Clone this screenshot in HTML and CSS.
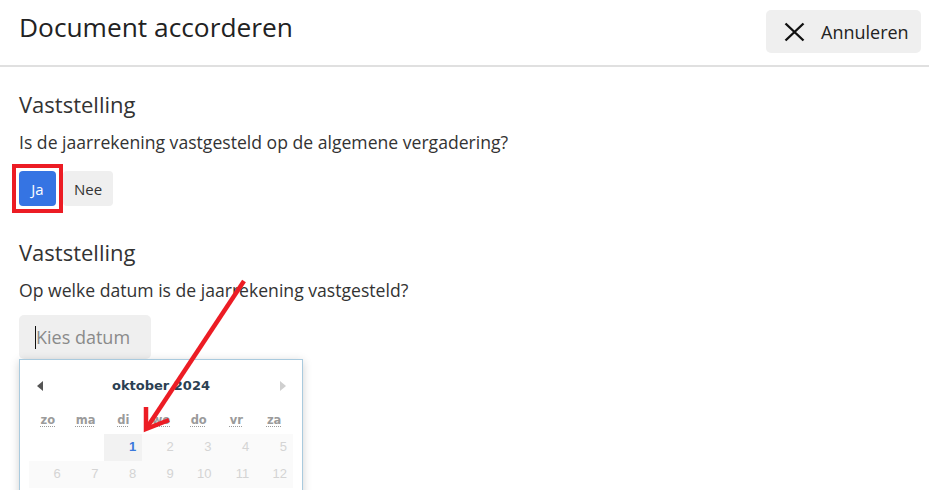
FILE: index.html
```html
<!DOCTYPE html>
<html lang="nl">
<head>
<meta charset="utf-8">
<title>Document accorderen</title>
<link rel="stylesheet" href="styles.css">
</head>
<body>
<header class="topbar">
  <h1 class="title">Document accorderen</h1>
  <button class="cancel" type="button">
    <svg class="cancel-icon" width="21" height="20" viewBox="0 0 21 20" aria-hidden="true">
      <path d="M1.5 1.5 L19.5 18.5 M19.5 1.5 L1.5 18.5" stroke="#111" stroke-width="2.4" fill="none"/>
    </svg>
    <span>Annuleren</span>
  </button>
</header>

<main class="content">
  <section class="field">
    <h2 class="field-title">Vaststelling</h2>
    <p class="field-question">Is de jaarrekening vastgesteld op de algemene vergadering?</p>
    <div class="toggle">
      <button class="opt opt-active" type="button">Ja</button>
      <button class="opt" type="button">Nee</button>
    </div>
  </section>

  <section class="field field-date">
    <h2 class="field-title">Vaststelling</h2>
    <p class="field-question">Op welke datum is de jaarrekening vastgesteld?</p>
    <div class="date-wrap">
      <input class="date-input" type="text" placeholder="Kies datum">
      <span class="date-caret"></span>
      <div class="datepicker">
        <div class="dp-header">
          <span class="dp-prev"></span>
          <span class="dp-month">oktober 2024</span>
          <span class="dp-next"></span>
        </div>
        <div class="dp-grid">
          <div class="dp-wd"><abbr title="zondag">zo</abbr></div>
          <div class="dp-wd"><abbr title="maandag">ma</abbr></div>
          <div class="dp-wd"><abbr title="dinsdag">di</abbr></div>
          <div class="dp-wd"><abbr title="woensdag">wo</abbr></div>
          <div class="dp-wd"><abbr title="donderdag">do</abbr></div>
          <div class="dp-wd"><abbr title="vrijdag">vr</abbr></div>
          <div class="dp-wd"><abbr title="zaterdag">za</abbr></div>

          <div class="dp-empty"></div>
          <div class="dp-empty"></div>
          <div class="dp-day dp-day-active">1</div>
          <div class="dp-day">2</div>
          <div class="dp-day">3</div>
          <div class="dp-day">4</div>
          <div class="dp-day">5</div>

          <div class="dp-day">6</div>
          <div class="dp-day">7</div>
          <div class="dp-day">8</div>
          <div class="dp-day">9</div>
          <div class="dp-day">10</div>
          <div class="dp-day">11</div>
          <div class="dp-day">12</div>
        </div>
      </div>
    </div>
  </section>
</main>

<svg class="annot-arrow" width="929" height="490" viewBox="0 0 929 490" aria-hidden="true">
  <line x1="244" y1="281" x2="148" y2="426" stroke="#ec1c24" stroke-width="4.5"/>
  <polyline points="146,407 146,429 169,420" stroke="#ec1c24" stroke-width="4.5" fill="none" stroke-linejoin="miter"/>
</svg>
</body>
</html>
```

FILE: styles.css
```css
html, body {
  margin: 0;
  padding: 0;
  overflow: hidden;
  background: #fff;
}

body {
  font-family: "Open Sans", "Noto Sans", sans-serif;
  color: #333;
  width: 929px;
  height: 490px;
  position: relative;
}

/* ---------- top bar ---------- */
.topbar {
  height: 65px;
  border-bottom: 2px solid #e0e0e0;
  display: flex;
  justify-content: space-between;
  align-items: flex-start;
  padding: 0 8px 0 19px;
}

.title {
  margin: 9px 0 0;
  font-size: 26.3px;
  line-height: 36px;
  font-weight: 400;
  color: #222;
}

.cancel {
  margin-top: 10px;
  width: 155px;
  height: 43px;
  box-sizing: border-box;
  padding: 0 12px 0 18px;
  display: flex;
  align-items: center;
  gap: 16px;
  border: none;
  border-radius: 5px;
  background: #efefef;
  font-family: "Open Sans", sans-serif;
  font-size: 18px;
  color: #222;
}

.cancel-icon {
  flex: none;
  display: block;
}

/* ---------- content ---------- */
.content {
  padding: 22px 19px 0;
}

.field-title {
  margin: 0;
  font-size: 22px;
  line-height: 30px;
  font-weight: 400;
  color: #333;
}

.field-question {
  margin: 10px 0 0;
  font-size: 17.6px;
  line-height: 26px;
  color: #333;
}

.field-date {
  margin-top: 31px;
}

.toggle {
  margin-top: 16px;
  display: flex;
  gap: 7px;
}

.opt {
  position: relative;
  height: 35px;
  width: 50px;
  padding: 0;
  border: none;
  border-radius: 4px;
  background: #efefef;
  font-family: "Open Sans", sans-serif;
  font-size: 15px;
  color: #333;
  display: flex;
  align-items: center;
  justify-content: center;
}

.opt-active {
  width: 37px;
  background: #3574e3;
  color: #fff;
}

/* red annotation box drawn over the "Ja" button */
.opt-active::after {
  content: "";
  position: absolute;
  top: -7px;
  left: -7px;
  right: -7px;
  bottom: -7px;
  border: 4px solid #ec1c24;
}

/* ---------- date input + picker ---------- */
.date-wrap {
  margin-top: 12px;
  position: relative;
  width: 132px;
}

.date-input {
  display: block;
  width: 132px;
  height: 44px;
  box-sizing: border-box;
  padding: 0 0 0 17px;
  border: none;
  border-radius: 5px;
  background: #efefef;
  font-family: "Open Sans", sans-serif;
  font-size: 18px;
  color: #333;
  outline: none;
}

.date-input::placeholder {
  color: #8a8a8a;
}

.date-caret {
  position: absolute;
  left: 16px;
  top: 11px;
  width: 1px;
  height: 23px;
  background: #111;
}

.datepicker {
  position: absolute;
  top: 44px;
  left: 0;
  width: 284px;
  box-sizing: border-box;
  padding: 10px 9px 12px;
  border: 1px solid #a9cade;
  background: #fff;
  box-shadow: 0 2px 9px rgba(0, 0, 0, 0.18);
  font-family: "Liberation Sans", Arial, sans-serif;
}

.dp-header {
  position: relative;
  height: 30px;
  display: flex;
  align-items: center;
  justify-content: center;
}

.dp-month {
  font-family: "DejaVu Sans", Verdana, sans-serif;
  font-weight: 700;
  font-size: 13px;
  color: #2b4052;
}

.dp-prev,
.dp-next {
  position: absolute;
  top: 11px;
  width: 0;
  height: 0;
  border-top: 5px solid transparent;
  border-bottom: 5px solid transparent;
}

.dp-prev {
  left: 8px;
  border-right: 6px solid #555;
}

.dp-next {
  right: 7px;
  border-left: 6px solid #cfcfcf;
}

.dp-grid {
  display: grid;
  grid-template-columns: repeat(7, 1fr);
}

.dp-wd {
  height: 34px;
  box-sizing: border-box;
  padding-top: 13px;
  line-height: 14px;
  text-align: center;
  font-family: "DejaVu Sans", Verdana, sans-serif;
  font-weight: 700;
  font-size: 11.5px;
  color: #9b9b9b;
}

.dp-wd abbr {
  text-decoration: underline dotted #9b9b9b;
  text-underline-offset: 2px;
  text-decoration-thickness: 1px;
}

.dp-empty {
  height: 27px;
}

.dp-day {
  height: 27px;
  box-sizing: border-box;
  padding: 0 6px 2px 0;
  line-height: 25px;
  text-align: right;
  font-size: 13px;
  color: #d4d4d4;
  background: #fafafa;
}

.dp-day-active {
  background: #f2f2f2;
  color: #3a78dc;
  font-weight: 700;
}

/* ---------- annotation ---------- */
.annot-arrow {
  position: absolute;
  top: 0;
  left: 0;
  pointer-events: none;
  z-index: 10;
}
```
